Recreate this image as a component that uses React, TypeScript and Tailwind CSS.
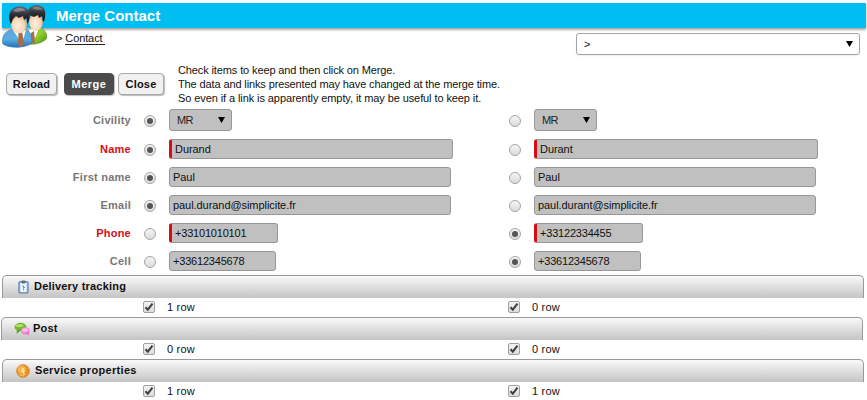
import React from "react";

function PeopleLogo() {
  return (
    <svg width="46" height="46" viewBox="0 0 46 46" className="block">
      <defs>
        <radialGradient id="skin" cx="45%" cy="60%" r="65%">
          <stop offset="0" stopColor="#fff0e2" />
          <stop offset="0.6" stopColor="#f9d5b4" />
          <stop offset="1" stopColor="#c98a5c" />
        </radialGradient>
        <linearGradient id="blueCoat" x1="0" y1="0" x2="0" y2="1">
          <stop offset="0" stopColor="#5da6d8" />
          <stop offset="0.55" stopColor="#58aee6" />
          <stop offset="1" stopColor="#2671b4" />
        </linearGradient>
        <linearGradient id="greenCoat" x1="0" y1="0" x2="1" y2="1">
          <stop offset="0" stopColor="#7db33c" />
          <stop offset="0.5" stopColor="#8fd02e" />
          <stop offset="1" stopColor="#4c8c12" />
        </linearGradient>
        <linearGradient id="hair" x1="0" y1="0" x2="0" y2="1">
          <stop offset="0" stopColor="#656b72" />
          <stop offset="0.45" stopColor="#303237" />
          <stop offset="1" stopColor="#08090b" />
        </linearGradient>
      </defs>
      <path d="M27 29 L39 25.500 C43 27 46 31 46 36 C42 41 34 43 27 42Z" fill="url(#greenCoat)" stroke="#4f8a20" strokeWidth=".6" />
      <path d="M28 28 L38 26 L35 34 L29 41Z" fill="#fff" />
      <path d="M30 31 L33 29 L34 41 L29 42Z" fill="#a87040" />
      <ellipse cx="35" cy="20" rx="7" ry="9" fill="url(#skin)" />
      <path d="M27 19 C24 6 31 3 36 3 C44 4 45.500 9 43.500 18 L42 20 L41 14 L38 16 L37 13 L33 15 L28 13Z" fill="url(#hair)" />
      <path d="M31 6 C34 4 39 4 42 8 C38 7 36 9 31 6Z" fill="#9a9ea4" opacity=".6" />
      <path d="M1.500 40 C1.500 32 5 29 12 27 L25 27.500 C29 29 31 34 31 41 C24 46.500 8 46.500 2 42Z" fill="url(#blueCoat)" stroke="#3c7fad" strokeWidth=".7" />
      <path d="M12 28 L25 28 L21 42Z" fill="#f5faff" />
      <path d="M17.500 30 L21 30 L23.500 42 L20 45 L17 42Z" fill="#a86d40" />
      <ellipse cx="18" cy="22" rx="8" ry="9.300" fill="url(#skin)" />
      <path d="M10 22 C7.500 17 7 12 11 7.500 C16 2.500 24 3.500 27.500 8.500 C30 13 28.500 18 26.500 22 L25.500 16 L23 18 L22 14 L18 16 L15 14 L12 17Z" fill="url(#hair)" />
      <path d="M12 9 C16 4.500 22 5 25 9 C20 8 18 11.500 12 9Z" fill="#a0a4a9" opacity=".65" />
    </svg>
  );
}

function ClipboardIcon() {
  return (
    <svg width="11" height="14" viewBox="0 0 11 14">
      <rect x=".7" y="1.500" width="9.600" height="11.700" rx="1" fill="#7fa8d0" stroke="#5f87ae" strokeWidth=".7" />
      <rect x="2.300" y="3" width="6.400" height="9" fill="#f2f8ff" />
      <rect x="3.500" y=".4" width="4" height="3" rx=".8" fill="#5d6d7f" />
      <path d="M4 6h1.600v4.500M5 7.500h2" stroke="#708fae" strokeWidth=".9" fill="none" />
    </svg>
  );
}

function ChatIcon() {
  return (
    <svg width="17" height="14" viewBox="0 0 17 14">
      <ellipse cx="6.500" cy="5" rx="6" ry="4.300" fill="#75b82f" />
      <path d="M3 8 L2.500 12 L7 8Z" fill="#5e9d23" />
      <ellipse cx="5.500" cy="3.600" rx="4" ry="1.700" fill="#b1de73" />
      <ellipse cx="11.500" cy="9" rx="4.300" ry="3.800" fill="#ec8bd2" />
      <path d="M12 11.500 L15.500 13.500 L14.500 10Z" fill="#e376c7" />
      <ellipse cx="11" cy="8" rx="3" ry="1.700" fill="#f9bfe8" />
    </svg>
  );
}

function CoinIcon() {
  return (
    <svg width="14" height="14" viewBox="0 0 14 14">
      <circle cx="7" cy="7" r="6.400" fill="#e99024" stroke="#d07a1d" strokeWidth=".6" />
      <circle cx="5.800" cy="5.500" r="4" fill="#f8b54e" />
      <path d="M5.500 5.300 L7.200 4.200 V10 M5.300 7h3.500M7.200 10h2" fill="none" stroke="#fff0bd" strokeWidth="1" />
      <path d="M3 9.500c1 1.800 3 2.500 5 2.200" fill="none" stroke="#ffd47c" />
    </svg>
  );
}

function Radio({ on }: { on: boolean }) {
  return (
    <span className="mt-px flex size-[12px] shrink-0 items-center justify-center rounded-full border border-[#a4a4a4] bg-linear-to-b from-[#f4f4f4] to-[#dcdcdc]">
      {on && <span className="size-[6px] rounded-full bg-[#555]" />}
    </span>
  );
}

function Check() {
  return (
    <span className="flex size-[12px] shrink-0 items-center justify-center rounded-[2px] border border-[#a0a0a0] bg-linear-to-b from-[#f3f3f3] to-[#dcdcdc]">
      <svg width="10" height="10" viewBox="0 0 10 10">
        <path d="M1.500 5.300 L3.800 7.700 L8.500 1.700" fill="none" stroke="#414141" strokeWidth="2.100" />
      </svg>
    </span>
  );
}

function Triangle() {
  return (
    <svg width="7" height="6" viewBox="0 0 7 6" className="mb-px">
      <path d="M0 0h7L3.500 6z" fill="#000" />
    </svg>
  );
}

function Field({ value, width, required }: { value: string; width: string; required?: boolean }) {
  const tracking = value.startsWith("+") ? "tracking-[-0.2px]" : "tracking-[-0.06px]";
  return (
    <div
      className={`flex h-5 items-center rounded-[3px] border border-[#979797] bg-[#c0c0c0] ${width} ${
        required ? "border-l-[3px] border-l-[#d90c14] pl-[3px]" : "pl-[3px]"
      }`}
    >
      <span className={tracking}>{value}</span>
    </div>
  );
}

function Civility() {
  return (
    <div className="flex h-[22px] w-[63px] items-center justify-between rounded-[3px] border border-[#979797] bg-[#c0c0c0] pr-[6px] pl-[7px]">
      <span className="tracking-[-0.6px] text-[#222]">MR</span>
      <Triangle />
    </div>
  );
}

type RowData = {
  label: string;
  left: string;
  right: string;
  keepLeft: boolean;
  width: string;
  required?: boolean;
};

const rows: RowData[] = [
  { label: "Name", left: "Durand", right: "Durant", keepLeft: true, width: "w-[284px]", required: true },
  { label: "First name", left: "Paul", right: "Paul", keepLeft: true, width: "w-[282px]" },
  { label: "Email", left: "paul.durand@simplicite.fr", right: "paul.durant@simplicite.fr", keepLeft: true, width: "w-[282px]" },
  { label: "Phone", left: "+33101010101", right: "+33122334455", keepLeft: false, width: "w-[109px]", required: true },
  { label: "Cell", left: "+33612345678", right: "+33612345678", keepLeft: false, width: "w-[107px]" },
];

const rowGrid = "grid grid-cols-[131px_13px_25px_340px_25px_1fr] items-center";

function FormRow({ label, keepLeft, required, children }: {
  label: string; keepLeft: boolean; required?: boolean; children: [React.ReactNode, React.ReactNode];
}) {
  return (
    <div className={`${rowGrid} h-7`}>
      <span className={`text-right font-bold tracking-[0.25px] ${required ? "text-[#d90c14]" : "text-[#777]"}`}>{label}</span>
      <span />
      <Radio on={keepLeft} />
      {children[0]}
      <Radio on={!keepLeft} />
      {children[1]}
    </div>
  );
}

function Section({ title, icon, left, right, inset, iconPad, tracking }: {
  title: string; icon: React.ReactNode; left: string; right: string; inset: string; iconPad: string; tracking: string;
}) {
  return (
    <section className="h-[42px]">
      <div className={`flex h-[23px] w-[862px] items-center rounded-t-[5px] border border-b-0 border-[#999] bg-linear-to-b from-[#fafafa] to-[#c4c4c4] font-bold text-[#111] ${inset} ${iconPad}`}>
        {icon}
        <span className={`mb-[2px] ${tracking}`}>{title}</span>
      </div>
      <div className="flex h-[18px] items-center pl-[143px]">
        <Check />
        <span className="w-[353px] pl-[12px] tracking-[0.2px]">{left}</span>
        <Check />
        <span className="pl-[12px] tracking-[0.2px]">{right}</span>
      </div>
    </section>
  );
}

export default function App() {
  const button = "flex h-[22px] items-center justify-center rounded-[4px] border font-bold shadow-[1px_1px_1px_#bbb]";
  return (
    <div className="h-[400px] w-[867px] overflow-hidden bg-white pt-[3px] font-['Liberation_Sans',Arial,sans-serif] text-[11px] leading-[14px] text-[#111]">
      <header className="relative ml-[2px] h-[25px] w-[864px] bg-[#00bdf2] pl-[54px] text-[15px] leading-[25px] font-bold text-white shadow-[0_2px_2px_#aaa]">
        <span>Merge Contact</span>
        <div className="absolute -top-[1px] left-0 -ml-[1px]">
          <PeopleLogo />
        </div>
      </header>
      <div className="flex h-[35px] justify-between pr-[7px] pl-[56px]">
        <nav className="pt-[3px] tracking-[-0.1px]">
          <span>&gt; </span>
          <span className="border-b border-[#222] leading-[11px] whitespace-pre">Contact </span>
        </nav>
        <div className="mt-[5px] flex h-[22px] w-[284px] items-center justify-between rounded-[3px] border border-[#a3a3aa] pr-[6px] pl-[7px] shadow-[0_1px_2px_#eee]">
          <span>&gt;</span>
          <Triangle />
        </div>
      </div>
      <div className="flex h-[43px] pl-[6px]">
        <div className="flex pt-[10px]">
          <button className={`${button} w-[51px] border-[#aaa] bg-[#f1f1f1] tracking-[0.1px]`}>Reload</button>
          <button className={`${button} ml-[7px] w-[50px] border-[#4b4b4b] bg-[#4b4b4b] tracking-[0.5px] text-white`}>Merge</button>
          <button className={`${button} ml-1 w-[46px] border-[#aaa] bg-[#f1f1f1] tracking-[0.2px]`}>Close</button>
        </div>
        <p className="ml-[14px] tracking-[-0.12px] whitespace-nowrap">
          Check items to keep and then click on Merge.<br />
          The data and links presented may have changed at the merge time.<br />
          <span className="tracking-[-0.09px]">So even if a link is apparently empty, it may be useful to keep it.</span>
        </p>
      </div>
      <main className="h-[169px]">
        <FormRow label="Civility" keepLeft>
          <Civility />
          <Civility />
        </FormRow>
        <div className="mt-px">
          {rows.map((row) => (
            <FormRow key={row.label} label={row.label} keepLeft={row.keepLeft} required={row.required}>
              <Field value={row.left} width={row.width} required={row.required} />
              <Field value={row.right} width={row.width} required={row.required} />
            </FormRow>
          ))}
        </div>
      </main>
      <Section title="Delivery tracking" icon={<ClipboardIcon />} left="1 row" right="0 row" inset="ml-[2px]" iconPad="pl-[15px] gap-[5px]" tracking="tracking-[0.2px]" />
      <Section title="Post" icon={<ChatIcon />} left="0 row" right="0 row" inset="ml-px" iconPad="pl-[12px] gap-[2px]" tracking="tracking-[0.2px]" />
      <Section title="Service properties" icon={<CoinIcon />} left="1 row" right="1 row" inset="ml-[2px]" iconPad="pl-[13px] gap-[5px]" tracking="tracking-[0.32px]" />
    </div>
  );
}
